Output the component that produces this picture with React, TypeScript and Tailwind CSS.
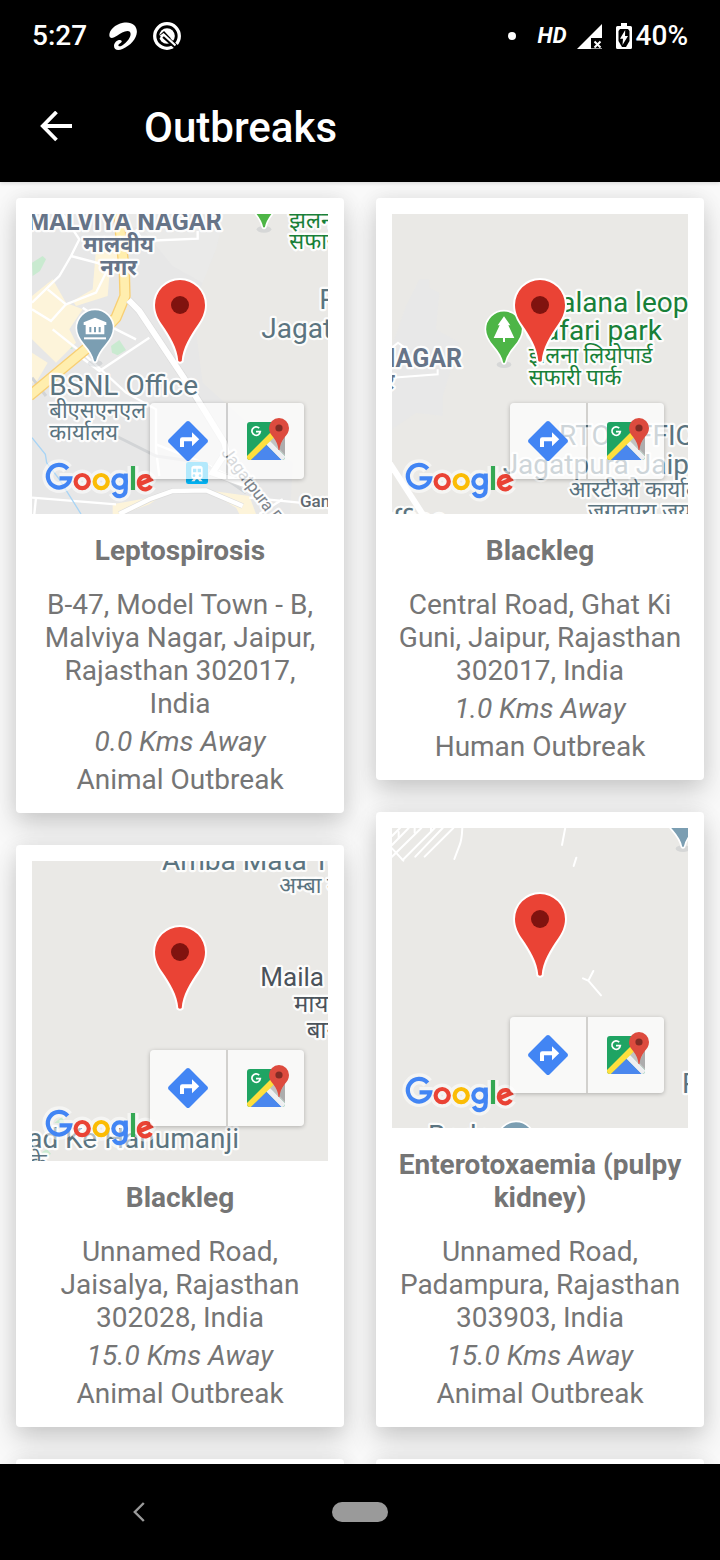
import type { ReactNode } from "react";

const FONT = "Roboto, 'Noto Sans', 'Noto Sans Devanagari', sans-serif";

type LabelProps = {
  x: number;
  y: number;
  children: string;
  size?: number;
  color?: string;
  weight?: number;
  anchor?: "start" | "middle" | "end";
  rotate?: number;
};

function Label({ x, y, children, size = 84, color = "#5b7480", weight = 400, anchor = "start", rotate }: LabelProps) {
  return (
    <text
      x={x}
      y={y}
      fontSize={size}
      fontWeight={weight}
      fontFamily={FONT}
      textAnchor={anchor}
      fill={color}
      stroke="#ffffff"
      strokeOpacity={0.9}
      strokeWidth={13}
      strokeLinejoin="round"
      paintOrder="stroke"
      transform={rotate ? `rotate(${rotate} ${x} ${y})` : undefined}
    >
      {children}
    </text>
  );
}

function PoiPin({ x, y, color, children }: { x: number; y: number; color: string; children?: ReactNode }) {
  return (
    <g transform={`translate(${x} ${y})`}>
      <ellipse cx="0" cy="106" rx="22" ry="10" fill="#9aa5ad" opacity="0.25" />
      <path
        d="M-56 0A56 56 0 0 1 56 0C56 22 46 36 32 52C18 68 8 84 5 100Q0 107 -5 100C-8 84 -18 68 -32 52C-46 36 -56 22 -56 0Z"
        fill={color}
        stroke="#fff"
        strokeWidth="5"
      />
      {children}
    </g>
  );
}

function Marker() {
  return (
    <g>
      <path
        d="M123 91A25 25 0 0 1 173 91C173 99 169.500 105.500 166 110.500C158 122 150.500 134 149.700 147Q148 148.500 146.300 147C145.500 134 138 122 130 110.500C126.500 105.500 123 99 123 91Z"
        fill="#ea4335"
        stroke="#fff"
        strokeWidth="4"
        paintOrder="stroke"
      />
      <circle cx="148" cy="91" r="9" fill="#80130f" />
    </g>
  );
}

function LogoShapes({ halo }: { halo?: boolean }) {
  const c = (color: string) => (halo ? "#ffffff" : color);
  const w = halo ? 11 : 4.2;
  return (
    <g fill="none" strokeWidth={w} strokeLinejoin={halo ? "round" : "miter"} opacity={halo ? 0.55 : 1}>
      <path d="M35.700 254.800A11.300 11.300 0 1 0 38.200 264.400L27.500 264.400" stroke={c("#4285f4")} />
      <circle cx="50.2" cy="267.600" r="6.600" stroke={c("#ea4335")} />
      <circle cx="69.2" cy="267.600" r="6.600" stroke={c("#fbbc05")} />
      <circle cx="87.6" cy="267.600" r="6.300" stroke={c("#4285f4")} />
      <path d="M93.700 259.500V275C93.700 283.500 84.500 284 81.800 278.300" stroke={c("#4285f4")} />
      <path d="M101 252V276" stroke={c("#34a853")} />
      <path d="M107.400 270.200L118.800 265.400A6.400 6.600 0 1 0 118.900 271.800" stroke={c("#ea4335")} />
    </g>
  );
}

function MapCanvas({ children, name }: { children?: ReactNode; name: string }) {
  return (
    <svg
      viewBox="48 54 888 900"
      preserveAspectRatio="xMidYMid slice"
      className="block h-full w-full"
      role="img"
      aria-label={name}
    >
      <rect x="-400" y="54" width="1800" height="900" fill="#eae9e6" />
      {children}
      <g transform="translate(48 54) scale(3)">
        <Marker />
        <LogoShapes halo />
        <LogoShapes />
      </g>
    </svg>
  );
}

function MalviyaNagarMap() {
  return (
    <MapCanvas name="Map of Malviya Nagar">
      <path d="M0 0H640L600 160L560 260L530 330L560 560L760 740L830 800L820 1000H0Z" fill="#e7e7e7" />
      <path d="M0 0H640L600 160L560 260L470 210L380 100Z" fill="#eaeae9" />
      <path d="M48 200L80 180L90 190L72 225L50 240Z" fill="#c9ead0" />
      <path d="M112 400L165 440L170 460L150 455L125 425Z" fill="#c9ead0" />
      <path d="M285 450L310 432L330 462L305 478L288 470Z" fill="#c9ead0" />
      <g fill="#fdf4da">
        <path d="M48 300L110 250L150 320L200 340L160 400L180 440L120 500L48 430Z" />
        <path d="M240 160L330 160L340 210L280 240L275 300L180 330L170 315L230 280Z" />
        <path d="M290 925L400 905L470 878L400 925L320 954H290Z" />
        <path d="M590 885L700 900L720 954H670L660 935L610 905Z" />
        <path d="M48 470L95 500L60 560L48 560Z" />
      </g>
      <g fill="none" stroke="#fff" strokeWidth="7">
        <path d="M140 54L190 130L165 180L130 240L48 320" />
        <path d="M165 180L280 210L240 290L150 325L95 280" />
        <path d="M360 100L380 135L545 128V105" />
        <path d="M150 325L105 375L48 340" />
        <path d="M200 335L290 395L360 430" />
        <path d="M400 425L250 525L190 480" />
        <path d="M110 400L210 480L330 590L420 640V760L430 840" />
        <path d="M48 905L300 925M60 905L55 954" />
        <path d="M420 745L560 800L640 840" />
        <path d="M700 905L850 920M730 954L800 910" />
      </g>
      <path d="M48 545L90 600M300 720L420 780L560 800L690 890" fill="none" stroke="#d2d4d6" strokeWidth="9" />
      <path d="M48 725L88 775L92 800L130 850L195 954" fill="none" stroke="#a8d4f5" strokeWidth="4" />
      <path d="M308 54L325 230L327 300L300 365L215 455L40 600" fill="none" stroke="#f8cf74" strokeWidth="34" strokeLinejoin="round" />
      <path d="M308 54L325 230L327 300L300 365L215 455L40 600" fill="none" stroke="#ffeeae" strokeWidth="26" strokeLinejoin="round" />
      <path d="M338 312L370 345L520 570L625 740L635 780M635 760L590 830L700 870" fill="none" stroke="#dcdcdc" strokeWidth="22" />
      <path d="M338 312L370 345L520 570L625 740L635 780M635 760L590 830L700 870" fill="none" stroke="#fff" strokeWidth="18" />
      <path d="M310 954L400 910L470 885L570 883L680 930" fill="none" stroke="#dcdcdc" strokeWidth="17" />
      <path d="M310 954L400 910L470 885L570 883L680 930" fill="none" stroke="#fff" strokeWidth="13" />
      <Label x={617} y={103} size={75} weight={700} color="#667488" anchor="end">MALVIYA NAGAR</Label>
      <Label x={308} y={169} size={66} weight={700} color="#667488" anchor="middle">मालवीय</Label>
      <Label x={308} y={236} size={66} weight={700} color="#667488" anchor="middle">नगर</Label>
      <PoiPin x={744} y={-6} color="#4db546" />
      <Label x={820} y={95} size={66} color="#188038">झलना</Label>
      <Label x={820} y={158} size={66} color="#188038">सफारी</Label>
      <Label x={910} y={340}>RTO</Label>
      <Label x={736} y={425}>Jagatpura</Label>
      <PoiPin x={237} y={396} color="#7b9eb2">
        <path d="M-34 -17L0 -31L34 -17V-9H28V19H-28V-9H-34ZM-17 -3V13H-11V-3ZM-3 -3V13H3V-3ZM11 -3V13H17V-3Z" fill="#fff" fillRule="evenodd" />
        <path d="M-33 31H33" stroke="#fff" strokeWidth="6" />
      </PoiPin>
      <Label x={100} y={597}>BSNL Office</Label>
      <Label x={100} y={667} size={66}>बीएसएनएल</Label>
      <Label x={100} y={732} size={66}>कार्यालय</Label>
      <rect x="510" y="798" width="66" height="66" rx="7" fill="#03b4f5" />
      <path d="M526 817Q526 809 535 809H551Q560 809 560 817V842Q560 848 553 848L560 856H550L546 850H540L536 856H526L533 848Q526 848 526 842ZM531 818V829H541V818ZM545 818V829H555V818Z" fill="#fff" fillRule="evenodd" />
      <circle cx="534" cy="839" r="4" fill="#03b4f5" />
      <circle cx="552" cy="839" r="4" fill="#03b4f5" />
      <Label x={614} y={770} size={50} color="#7b838b" rotate={53}>Jagatpura Flyover</Label>
      <Label x={852} y={933} size={51} weight={500} color="#5f6870">Gandhi</Label>
    </MapCanvas>
  );
}

function JhalanaMap() {
  return (
    <MapCanvas name="Map of Jhalana safari park">
      <path d="M130 250H160V275L190 290L180 400L250 440L200 600V660L120 650L48 700V450L90 330Z" fill="#e8e8e8" />
      <path d="M48 455L66 440L100 465M48 545L185 535V520" fill="none" stroke="#fff" strokeWidth="6" />
      <path d="M40 800L150 970" fill="none" stroke="#fff" strokeWidth="18" />
      <Label x={258} y={512} size={75} weight={700} color="#667488" anchor="end">NAGAR</Label>
      <Label x={55} y={580} size={66} weight={700} color="#667488" anchor="end">नगर</Label>
      <Label x={460} y={347} color="#188038">Jhalana leopard</Label>
      <Label x={454} y={431} color="#188038">Safari park</Label>
      <Label x={458} y={500} size={66} color="#188038">झलना लियोपार्ड</Label>
      <Label x={458} y={566} size={66} color="#188038">सफारी पार्क</Label>
      <PoiPin x={384} y={400} color="#4db546">
        <path d="M0 -39L19 -12H13L31 26H3V38H-3V26H-31L-13 -12H-19Z" fill="#fff" />
      </PoiPin>
      <Label x={549} y={748}>RTO OFFICE</Label>
      <Label x={380} y={833}>Jagatpura Jaipur</Label>
      <Label x={578} y={902} size={66}>आरटीओ कार्यालय</Label>
      <Label x={636} y={968} size={66}>जगतपुरा जयपुर</Label>
      <Label x={-8} y={998}>Office</Label>
    </MapCanvas>
  );
}

function JaisalyaMap() {
  return (
    <MapCanvas name="Map of Jaisalya">
      <path d="M72 932L92 918L105 932L90 945ZM115 840L140 820L145 840Z" fill="#c9ead0" />
      <Label x={438} y={81}>Amba Mata Temple</Label>
      <Label x={790} y={149} size={66}>अम्बा माता</Label>
      <Label x={733} y={429} size={78} color="#4b535b">Maila Bagh</Label>
      <Label x={834} y={507} size={72} color="#4b535b">मायला</Label>
      <Label x={872} y={585} size={72} color="#4b535b">बाग</Label>
      <Label x={669} y={914} anchor="end">Garhi ad Ke Hanumanji</Label>
      <Label x={92} y={978} size={66} anchor="end">के</Label>
    </MapCanvas>
  );
}

function PadampuraMap() {
  return (
    <MapCanvas name="Map of Padampura">
      <g fill="none" stroke="#fff" strokeWidth="6" strokeLinecap="round">
        <path d="M48 78L72 54M48 105L98 54M48 140L136 54M80 150L176 54M118 140L200 54M146 140L232 54" />
        <path d="M48 115L82 152M68 66V84M116 54V68M165 54V64" />
        <path d="M259 50Q258 90 250 108L235 147M568 52L558 105M601 143L593 168" />
        <path d="M621 505L637 512L652 483M637 512L675 556" />
      </g>
      <PoiPin x={921} y={10} color="#7b9eb2" />
      <Label x={918} y={849}>Padampura</Label>
      <Label x={156} y={1006}>Bada</Label>
      <PoiPin x={420} y={990} color="#7b9eb2" />
    </MapCanvas>
  );
}

function DirectionsIcon() {
  return (
    <svg viewBox="0 0 40 40" className="size-10" aria-hidden="true">
      <path d="M18.500 .6Q20 -.5 21.500 .6L39.400 18.500Q40.500 20 39.400 21.500L21.500 39.400Q20 40.500 18.500 39.400L.6 21.500Q-.5 20 .6 18.500Z" fill="#4285f4" />
      <path d="M12 26V18.500Q12 16.200 14.300 16.200H24V11.300L31.200 18.300L24 25.300V20.200H16V26Z" fill="#fff" />
    </svg>
  );
}

function MapsIcon() {
  return (
    <svg viewBox="0 0 38 38" className="size-[38px] overflow-visible" aria-hidden="true">
      <path d="M3 0H35Q38 0 38 3V35Q38 38 35 38H3Q0 38 0 35V3Q0 0 3 0Z" fill="#1fa463" />
      <path d="M22.500 19L38 4V34Z" fill="#c2c2c2" />
      <path d="M32 26L38 14V33Z" fill="#adadad" />
      <path d="M19 22.500L22.800 18.800L38 34V35Q38 38 35 38H34Z" fill="#efeff1" />
      <path d="M19 22.500L34.500 38H3.500Z" fill="#4a87ee" />
      <path d="M0 34L24 10L29 13.500L3.800 38H3Q0 38 0 35Z" fill="#fedf3d" />
      <path d="M12.200 6.200A4.200 4.200 0 1 0 13.300 9.600H9" fill="none" stroke="#fff" strokeWidth="1.7" />
      <path d="M22 6A10 10 0 0 1 42 6C42 10 40 12.500 37.500 15.500C34.500 19.500 32.800 23.500 32.500 28H31.500C31.200 23.500 29.500 19.500 26.500 15.500C24 12.500 22 10 22 6Z" fill="#dd4b3e" />
      <circle cx="32" cy="6" r="3.600" fill="#822c25" />
    </svg>
  );
}

type Outbreak = {
  disease: string;
  address: string;
  distance: string;
  kind: string;
  map: ReactNode;
};

const leftColumn: Outbreak[] = [
  {
    disease: "Leptospirosis",
    address: "B-47, Model Town - B, Malviya Nagar, Jaipur, Rajasthan 302017, India",
    distance: "0.0 Kms Away",
    kind: "Animal Outbreak",
    map: <MalviyaNagarMap />,
  },
  {
    disease: "Blackleg",
    address: "Unnamed Road, Jaisalya, Rajasthan 302028, India",
    distance: "15.0 Kms Away",
    kind: "Animal Outbreak",
    map: <JaisalyaMap />,
  },
];

const rightColumn: Outbreak[] = [
  {
    disease: "Blackleg",
    address: "Central Road, Ghat Ki Guni, Jaipur, Rajasthan 302017, India",
    distance: "1.0 Kms Away",
    kind: "Human Outbreak",
    map: <JhalanaMap />,
  },
  {
    disease: "Enterotoxaemia (pulpy kidney)",
    address: "Unnamed Road, Padampura, Rajasthan 303903, India",
    distance: "15.0 Kms Away",
    kind: "Animal Outbreak",
    map: <PadampuraMap />,
  },
];

const cardClass =
  "rounded bg-white p-4 shadow-[0_14px_28px_rgba(0,0,0,0.16),0_0_20px_rgba(0,0,0,0.08)]";

function OutbreakCard({ item }: { item: Outbreak }) {
  return (
    <article className={cardClass}>
      <div className="relative h-[300px] overflow-hidden">
        {item.map}
        <div className="absolute right-6 bottom-[35px] flex rounded-sm shadow-[0_1px_4px_rgba(0,0,0,0.25)]">
          <button type="button" aria-label="Directions" className="flex size-[76px] items-center justify-center rounded-l-sm bg-white/70">
            <DirectionsIcon />
          </button>
          <span className="w-0.5 bg-black/10" />
          <button type="button" aria-label="Open in Maps" className="flex size-[76px] items-center justify-center rounded-r-sm bg-white/70">
            <MapsIcon />
          </button>
        </div>
      </div>
      <div className="pb-px text-center text-[28px] leading-[33px] text-[#757575]">
        <h2 className="mt-5 font-bold">{item.disease}</h2>
        <p className="mt-[21px]">{item.address}</p>
        <p className="mt-[5px] italic">{item.distance}</p>
        <p className="mt-[5px]">{item.kind}</p>
      </div>
    </article>
  );
}

function Column({ items }: { items: Outbreak[] }) {
  return (
    <div className="flex min-w-0 flex-1 flex-col gap-8">
      {items.map((item) => (
        <OutbreakCard key={item.address} item={item} />
      ))}
      <div className={cardClass}>
        <div className="h-[300px] bg-[#eae9e6]" />
      </div>
    </div>
  );
}

function StatusBar() {
  return (
    <div className="flex h-[72px] shrink-0 items-center px-8 text-[28px] leading-8 font-medium">
      <span>5:27</span>
      <svg viewBox="0 0 28 28" className="ml-[22px] size-7" aria-hidden="true">
        <path
          d="M.6 14.500C-1 10 5 2.500 14 .8C22 -.8 28 3 27.900 10C27.500 17 21.500 23.500 13.500 27C9 28.800 5 28 5 24C5 20.500 8 17.800 11 17.900C13.400 18 13.200 20.500 11.200 21.300C9.500 22 8.800 23.800 10 24.200C12.500 24.800 17 21 19.700 17.200C22.500 13 22.300 9 18.500 9C15 9 11.500 11.500 8 13.800C5 15.800 1.500 17 .6 14.500Z"
          fill="#fff"
        />
      </svg>
      <svg viewBox="0 0 28 28" className="ml-4 size-7" aria-hidden="true">
        <circle cx="14" cy="14" r="12.300" fill="none" stroke="#fff" strokeWidth="3.300" />
        <circle cx="14" cy="14" r="7.800" fill="#fff" />
        <path d="M5 16L11 10.500L17 17" fill="none" stroke="#000" strokeWidth="2.200" />
        <path d="M11 14L24.500 26" fill="none" stroke="#000" strokeWidth="5" />
        <path d="M7.500 14.500L10.500 12.500L22.500 23.500" fill="none" stroke="#fff" strokeWidth="2.200" />
      </svg>
      <span className="mr-[22px] ml-auto size-2 rounded-full bg-white" />
      <span className="text-[22px] font-bold italic">HD</span>
      <svg viewBox="0 0 25 25" className="ml-2.5 size-[25px]" aria-hidden="true">
        <path d="M25 0V14H14V25H0Z" fill="#fff" />
        <path d="M14 24.500H25" stroke="#999" />
        <path d="M17.500 17.500L23.500 23.500M23.500 17.500L17.500 23.500" stroke="#fff" strokeWidth="2" />
      </svg>
      <svg viewBox="0 0 16 26" className="ml-3.5 h-[26px] w-4" aria-hidden="true">
        <path d="M5 0H11V3H14.500Q16 3 16 4.500V24.500Q16 26 14.500 26H1.500Q0 26 0 24.500V4.500Q0 3 1.500 3H5Z" fill="#fff" />
        <path d="M4 6H12L13.500 8V18L10 24H6L2.500 18V8Z" fill="#000" />
        <path d="M9.200 7L4 15.800H7L6.500 22L12 13H9Z" fill="#fff" />
      </svg>
      <span className="ml-1">40%</span>
    </div>
  );
}

export default function App() {
  return (
    <div className="flex h-screen flex-col bg-[#f9f9f9] font-[Roboto,'Noto_Sans',sans-serif]">
      <header className="relative z-10 shrink-0 bg-black text-white shadow-[0_1px_4px_rgba(0,0,0,0.15)]">
        <StatusBar />
        <div className="flex h-[110px] items-center px-10">
          <button type="button" aria-label="Back" className="block">
            <svg viewBox="0 0 32 32" className="size-8" aria-hidden="true">
              <path d="M16.500 1L2.800 15L16.500 29M2.500 15H32" fill="none" stroke="#fff" strokeWidth="3.800" />
            </svg>
          </button>
          <h1 className="ml-[72px] pt-0.5 text-[42px] leading-[48px] font-medium">Outbreaks</h1>
        </div>
      </header>
      <main className="min-h-0 flex-1 overflow-y-auto [scrollbar-width:none]">
        <div className="flex items-start gap-8 p-4">
          <Column items={leftColumn} />
          <Column items={rightColumn} />
        </div>
      </main>
      <nav className="grid h-24 shrink-0 grid-cols-[1fr_auto_1fr] items-center bg-black">
        <div className="flex justify-center pr-[54px]">
          <button type="button" aria-label="Navigate back" className="block">
            <svg viewBox="0 0 12 20" className="h-5 w-3" aria-hidden="true">
              <path d="M10.800 1L1.800 10L10.800 19" fill="none" stroke="#9a9a9a" strokeWidth="2.400" />
            </svg>
          </button>
        </div>
        <button type="button" aria-label="Home" className="h-5 w-14 rounded-full bg-[#9a9a9a]" />
      </nav>
    </div>
  );
}
